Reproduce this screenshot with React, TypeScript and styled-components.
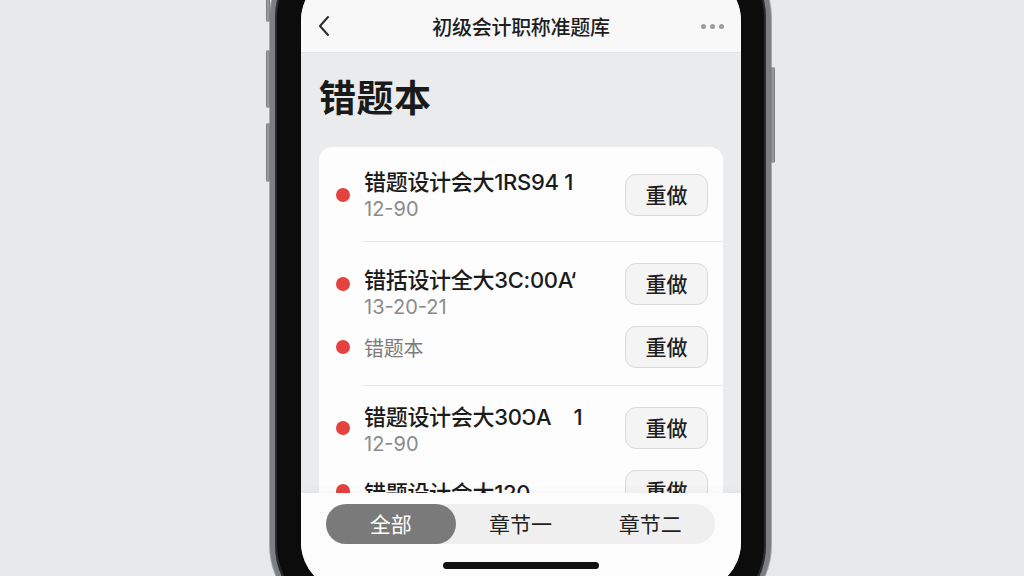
import React from "react";
import styled, { createGlobalStyle } from "styled-components";

const GlobalStyle = createGlobalStyle`
  html, body {
    margin: 0;
    padding: 0;
    background: #e7eaec;
  }
  * {
    box-sizing: border-box;
  }
  body {
    font-family: "Inter", "Noto Sans CJK SC", sans-serif;
  }
`;

const Stage = styled.div`
  width: 1024px;
  height: 576px;
  overflow: hidden;
  display: flex;
  align-items: flex-start;
  padding-left: 270px;
  background: #e7eaec;
`;

const Phone = styled.div`
  position: relative;
  margin-top: -60px;
  width: 501px;
  height: 683px;
  flex-shrink: 0;
  padding: 26px 25px 26px 26px;
  background: #0c0c0d;
  border: 5px solid #7c7e81;
  border-radius: 78px;
  box-shadow: inset 0 0 0 2px #2a2b2d, 0 0 0 1px #a8aaad;
`;

const SideButton = styled.span<{ $side: "left" | "right"; $top: number; $h: number }>`
  position: absolute;
  ${(p) => (p.$side === "left" ? "left: -9px;" : "right: -9px;")}
  top: ${(p) => p.$top}px;
  width: 4px;
  height: ${(p) => p.$h}px;
  background: linear-gradient(90deg, #6f7174, #a4a6a9, #6f7174);
  border-radius: 2px;
`;

const Screen = styled.div`
  width: 100%;
  height: 100%;
  border-radius: 50px;
  overflow: hidden;
  background: #e9ebed;
  display: flex;
  flex-direction: column;
`;

const NavBar = styled.div`
  flex-shrink: 0;
  height: 82px;
  padding: 29px 16px 0 16px;
  background: #f8f8f8;
  border-bottom: 1px solid #e1e2e3;
  display: grid;
  grid-template-columns: 40px 1fr 40px;
  align-items: center;
`;

const NavTitle = styled.div`
  text-align: center;
  font-size: 20px;
  font-weight: 500;
  color: #1e1e1e;
  letter-spacing: -0.3px;
`;

const Dots = styled.div`
  display: flex;
  justify-content: flex-end;
  gap: 4px;
  padding-right: 1px;
  span {
    width: 5px;
    height: 5px;
    border-radius: 50%;
    background: #9d9d9d;
  }
`;

const Content = styled.div`
  flex: 1;
  min-height: 0;
  overflow: hidden;
  padding: 0 18px 0 18px;
`;

const PageTitle = styled.h1`
  margin: 22px 0 24px 0;
  font-size: 37px;
  line-height: 48px;
  font-weight: 700;
  color: #1a1a1a;
  letter-spacing: 0.5px;
`;

const Card = styled.div`
  background: #fdfdfd;
  border-radius: 13px;
  padding-top: 6px;
`;

const Group = styled.div<{ $pb: number }>`
  display: flex;
  flex-direction: column;
  gap: 21px;
  padding: 21px 15px ${(p) => p.$pb}px 17px;
`;

const Divider = styled.div`
  height: 1px;
  margin-left: 44px;
  background: #e8e8e8;
`;

const Item = styled.div`
  height: 42px;
  display: grid;
  grid-template-columns: 14px 1fr auto;
  column-gap: 14px;
  align-items: start;
`;

const Dot = styled.span`
  margin-top: 14px;
  width: 14px;
  height: 14px;
  border-radius: 50%;
  background: #e5413f;
`;

const TextBlock = styled.div<{ $single?: boolean; $dy: number }>`
  align-self: ${(p) => (p.$single ? "center" : "start")};
  margin-top: ${(p) => p.$dy}px;
  display: flex;
  flex-direction: column;
  min-width: 0;
`;

const ItemTitle = styled.div<{ $muted?: boolean }>`
  font-size: ${(p) => (p.$muted ? "20px" : "22px")};
  line-height: 26px;
  font-weight: ${(p) => (p.$muted ? 400 : 500)};
  color: ${(p) => (p.$muted ? "#7b7b7b" : "#1b1b1b")};
  white-space: pre;
  overflow: hidden;
  letter-spacing: -0.3px;
`;

const ItemSub = styled.div`
  font-size: 20px;
  line-height: 28px;
  color: #8b8b8b;
`;

const RedoButton = styled.button`
  width: 83px;
  height: 42px;
  border-radius: 11px;
  border: 1px solid #dadada;
  background: #f4f4f4;
  font-family: "Inter", "Noto Sans CJK SC", sans-serif;
  font-size: 21px;
  line-height: 1;
  font-weight: 500;
  color: #1f1f1f;
  padding: 0;
`;

const TabBar = styled.div`
  flex-shrink: 0;
  height: 99px;
  background: #fcfcfc;
  box-shadow: 0 -2px 8px rgba(0, 0, 0, 0.04);
  padding: 11px 26px 0 25px;
  display: flex;
  flex-direction: column;
  align-items: center;
`;

const Segmented = styled.div`
  width: 100%;
  height: 40px;
  border-radius: 20px;
  background: #efefef;
  display: grid;
  grid-template-columns: repeat(3, 1fr);
`;

const Segment = styled.div<{ $active?: boolean }>`
  display: flex;
  align-items: center;
  justify-content: center;
  border-radius: 20px;
  font-size: 21px;
  line-height: 1;
  color: ${(p) => (p.$active ? "#ffffff" : "#1f1f1f")};
  background: ${(p) => (p.$active ? "#7a7a7a" : "transparent")};
`;

const HomeIndicator = styled.div`
  margin-top: 18px;
  width: 156px;
  height: 7px;
  border-radius: 4px;
  background: #111111;
`;

type Entry = { title: string; sub?: string; muted?: boolean; dy?: number };

const groups: { pb: number; items: Entry[] }[] = [
  { pb: 25, items: [{ title: "错题设计会大1RS94 1", sub: "12-90", dy: -5 }] },
  {
    pb: 17,
    items: [
      { title: "错括设计全大3C:00A‘", sub: "13-20-21", dy: 4 },
      { title: "错题本", muted: true, dy: 3 },
    ],
  },
  {
    pb: 21,
    items: [
      { title: "错题设计会大30ↃA    1", sub: "12-90", dy: -3 },
      { title: "错题设计会大120", sub: "12-90", dy: 10 },
    ],
  },
];

const ChevronLeft = () => (
  <svg width="14" height="22" viewBox="0 0 14 22" fill="none">
    <path d="M11 2 L3 11 L11 20" stroke="#2a2a2a" strokeWidth="2" strokeLinecap="round" strokeLinejoin="round" />
  </svg>
);

export default function App() {
  return (
    <>
      <GlobalStyle />
      <Stage>
        <Phone>
          <SideButton $side="left" $top={35} $h={42} />
          <SideButton $side="left" $top={105} $h={58} />
          <SideButton $side="left" $top={178} $h={59} />
          <SideButton $side="right" $top={122} $h={96} />
          <Screen>
            <NavBar>
              <ChevronLeft />
              <NavTitle>初级会计职称准题库</NavTitle>
              <Dots>
                <span />
                <span />
                <span />
              </Dots>
            </NavBar>
            <Content>
              <PageTitle>错题本</PageTitle>
              <Card>
                {groups.map((g, gi) => (
                  <React.Fragment key={gi}>
                    {gi > 0 && <Divider />}
                    <Group $pb={g.pb}>
                      {g.items.map((e, i) => (
                        <Item key={i}>
                          <Dot />
                          <TextBlock $single={!e.sub} $dy={e.dy ?? 0}>
                            <ItemTitle $muted={e.muted}>{e.title}</ItemTitle>
                            {e.sub && <ItemSub>{e.sub}</ItemSub>}
                          </TextBlock>
                          <RedoButton>重做</RedoButton>
                        </Item>
                      ))}
                    </Group>
                  </React.Fragment>
                ))}
              </Card>
            </Content>
            <TabBar>
              <Segmented>
                <Segment $active>全部</Segment>
                <Segment>章节一</Segment>
                <Segment>章节二</Segment>
              </Segmented>
              <HomeIndicator />
            </TabBar>
          </Screen>
        </Phone>
      </Stage>
    </>
  );
}
